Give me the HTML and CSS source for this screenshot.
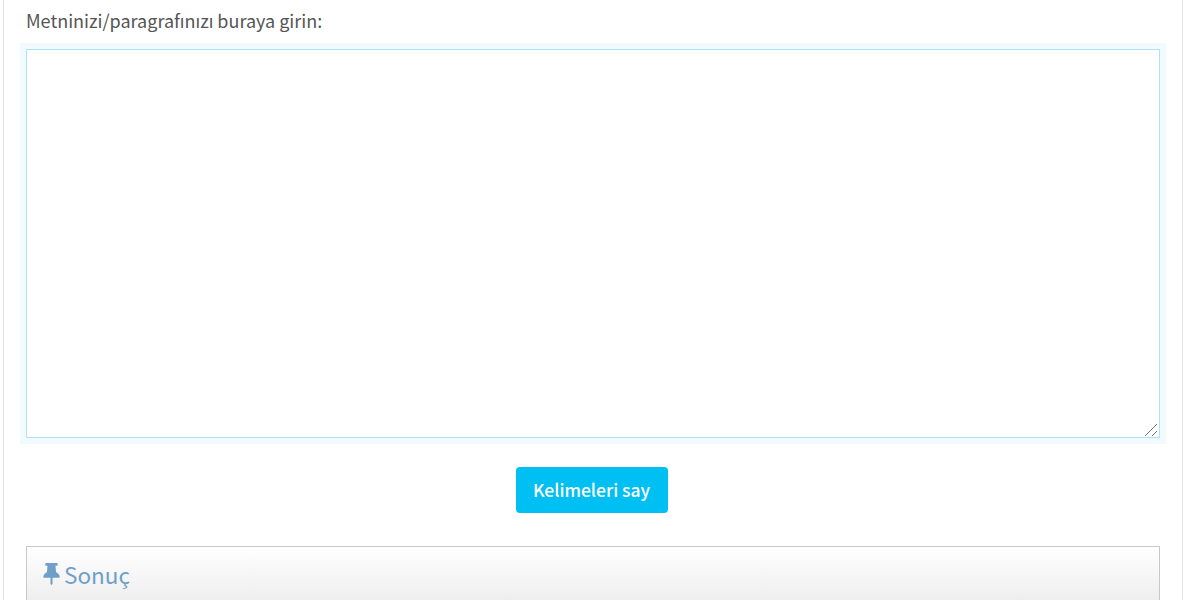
FILE: index.html
```html
<!DOCTYPE html>
<html lang="tr">
<head>
    <meta charset="utf-8">
    <title>Kelime sayacı</title>
    <link rel="stylesheet" href="styles.css">
</head>
<body>
<div id="wrap">
    <div class="toolBox">
        <label class="lbl" for="txt">Metninizi/paragrafınızı buraya girin:</label>
        <div class="txtWrap">
            <textarea class="txtArea" id="txt"></textarea>
            <svg class="grip" viewBox="0 0 14 14"><path d="M1 13 13 1M8 13l5-5"/></svg>
        </div>
        <div class="btnZone">
            <a href="#none" class="btn">Kelimeleri say</a>
        </div>
        <div class="resultBox">
            <div class="resultHead">
                <svg class="pin" viewBox="0 0 384 512"><path d="M298 214 285 64h35c9 0 16-7 16-16V16c0-9-7-16-16-16H64c-9 0-16 7-16 16v32c0 9 7 16 16 16h35L86 214C38 236 0 277 0 328c0 9 7 16 16 16h152v144l24 24 24-24V344h152c9 0 16-7 16-16 0-52-39-92-86-114z"/></svg>
                <span>Sonuç</span>
            </div>
        </div>
    </div>
</div>
</body>
</html>
```

FILE: styles.css
```css
* {padding: 0;margin: 0;box-sizing: border-box;}
html, body {height: 600px;overflow: hidden;background-color: #fff;}
body {font-family: "Noto Sans CJK KR", "Noto Sans", sans-serif;color: #555;}

#wrap {padding: 0 17px 0 3px;}
.toolBox {height: 600px;padding: 8px 22px 0;border-left: 1px solid #e3e3e3;border-right: 1px solid #e3e3e3;overflow: hidden;}

.lbl {display: block;font-size: 18px;line-height: 24px;height: 41px;color: #555;}
.txtWrap {position: relative;height: 389px;}
.txtArea {display: block;width: 100%;height: 389px;resize: none;border: 1px solid #aee3f7;box-shadow: 0 0 0 6px #f0faff;outline: 0;background-color: #fff;}
.grip {position: absolute;right: 2px;bottom: 1px;width: 14px;height: 14px;fill: none;stroke: #777;stroke-width: 1;}

.btnZone {display: flex;justify-content: center;padding: 29px 3px 0 0;}
.btn {display: block;width: 152px;height: 46px;line-height: 46px;text-align: center;font-size: 17.5px;font-weight: 500;color: #fff;text-decoration: none;background-color: #00c0f3;border-radius: 4px;}

.resultBox {margin-top: 33px;border: 1px solid #c8c8c8;border-bottom: 0;height: 100px;background: linear-gradient(#fff, #ececec 60px);}
.resultHead {display: flex;align-items: center;gap: 4px;padding: 12px 16px 0;font-size: 22.5px;line-height: 30px;color: #6f9fc8;}
.pin {width: 17px;height: 22px;fill: #6f9fc8;}
```
